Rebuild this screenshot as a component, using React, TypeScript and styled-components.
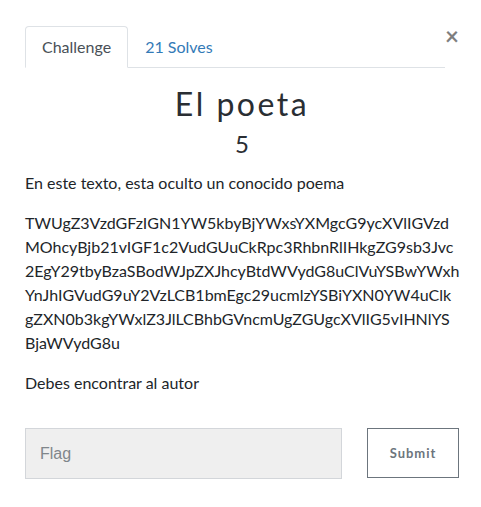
import styled, { createGlobalStyle } from "styled-components";

const GlobalStyle = createGlobalStyle`
  html, body {
    margin: 0;
    padding: 0;
    background: #ffffff;
  }
  body {
    font-family: Lato, "Liberation Sans", sans-serif;
    font-size: 16px;
    line-height: 1.5;
    color: #212529;
  }
  * {
    box-sizing: border-box;
  }
`;

const Modal = styled.div`
  width: 434px;
  margin-left: 25px;
  padding-top: 26px;
`;

const Header = styled.div`
  display: flex;
  align-items: flex-start;
`;

const Tabs = styled.ul`
  flex: 1;
  display: flex;
  list-style: none;
  margin: 0;
  padding: 0;
  border-bottom: 1px solid #dee2e6;
`;

const Tab = styled.li<{ $active?: boolean }>`
  margin-bottom: -1px;
  padding: 8px 16px;
  border: 1px solid ${(p) => (p.$active ? "#dee2e6" : "transparent")};
  border-bottom-color: ${(p) => (p.$active ? "#ffffff" : "transparent")};
  border-top-left-radius: 4px;
  border-top-right-radius: 4px;
  background: ${(p) => (p.$active ? "#ffffff" : "transparent")};
  color: ${(p) => (p.$active ? "#495057" : "#337ab7")};
  line-height: 24px;
  cursor: pointer;
`;

const Close = styled.button`
  border: 0;
  background: transparent;
  padding: 0;
  margin: -2px 0 0;
  width: 14px;
  text-align: left;
  font-family: Lato, sans-serif;
  font-size: 24px;
  font-weight: 700;
  line-height: 1;
  color: #000;
  opacity: 0.5;
  cursor: pointer;
`;

const Title = styled.h2`
  margin: 17px 0 0;
  text-align: center;
  font-family: Lato, "Open Sans", sans-serif;
  font-size: 32px;
  font-weight: 400;
  letter-spacing: 2.5px;
  line-height: 1.2;
  color: #2a2e33;
`;

const Points = styled.h4`
  margin: 7px 0 12px;
  text-align: center;
  font-family: Lato, "Open Sans", sans-serif;
  font-size: 24px;
  font-weight: 400;
  line-height: 1.2;
  color: #2a2e33;
`;

const Para = styled.p`
  margin: 0 0 16px;
`;

const CodeLine = styled.span`
  display: block;
  white-space: nowrap;
`;

const Form = styled.form`
  display: flex;
  gap: 25px;
  margin-top: 33px;
  align-items: flex-start;
`;

const FlagInput = styled.input`
  flex: 1;
  height: 51px;
  padding: 0 14px;
  border: 1px solid #d3d6da;
  background: #efefef;
  font-family: "Liberation Sans", Arial, sans-serif;
  font-size: 16px;
  color: #495057;
  outline: none;
  &::placeholder {
    color: #80868b;
  }
`;

const SubmitButton = styled.button`
  width: 92px;
  height: 50px;
  border: 1px solid #6c757d;
  background: #ffffff;
  color: #6c757d;
  font-family: Lato, sans-serif;
  font-size: 13px;
  font-weight: 700;
  letter-spacing: 1px;
  cursor: pointer;
`;

const encodedLines = [
  "TWUgZ3VzdGFzIGN1YW5kbyBjYWxsYXMgcG9ycXVlIGVzd",
  "MOhcyBjb21vIGF1c2VudGUuCkRpc3RhbnRlIHkgZG9sb3Jvc",
  "2EgY29tbyBzaSBodWJpZXJhcyBtdWVydG8uClVuYSBwYWxh",
  "YnJhIGVudG9uY2VzLCB1bmEgc29ucmlzYSBiYXN0YW4uClk",
  "gZXN0b3kgYWxlZ3JlLCBhbGVncmUgZGUgcXVlIG5vIHNlYS",
  "BjaWVydG8u",
];

export default function App() {
  return (
    <>
      <GlobalStyle />
      <Modal>
        <Header>
          <Tabs>
            <Tab $active>Challenge</Tab>
            <Tab>21 Solves</Tab>
          </Tabs>
          <Close aria-label="Close">×</Close>
        </Header>
        <Title>El poeta</Title>
        <Points>5</Points>
        <Para>En este texto, esta oculto un conocido poema</Para>
        <Para>
          {encodedLines.map((line) => (
            <CodeLine key={line}>{line}</CodeLine>
          ))}
        </Para>
        <Para>Debes encontrar al autor</Para>
        <Form onSubmit={(e) => e.preventDefault()}>
          <FlagInput placeholder="Flag" />
          <SubmitButton type="submit">Submit</SubmitButton>
        </Form>
      </Modal>
    </>
  );
}
